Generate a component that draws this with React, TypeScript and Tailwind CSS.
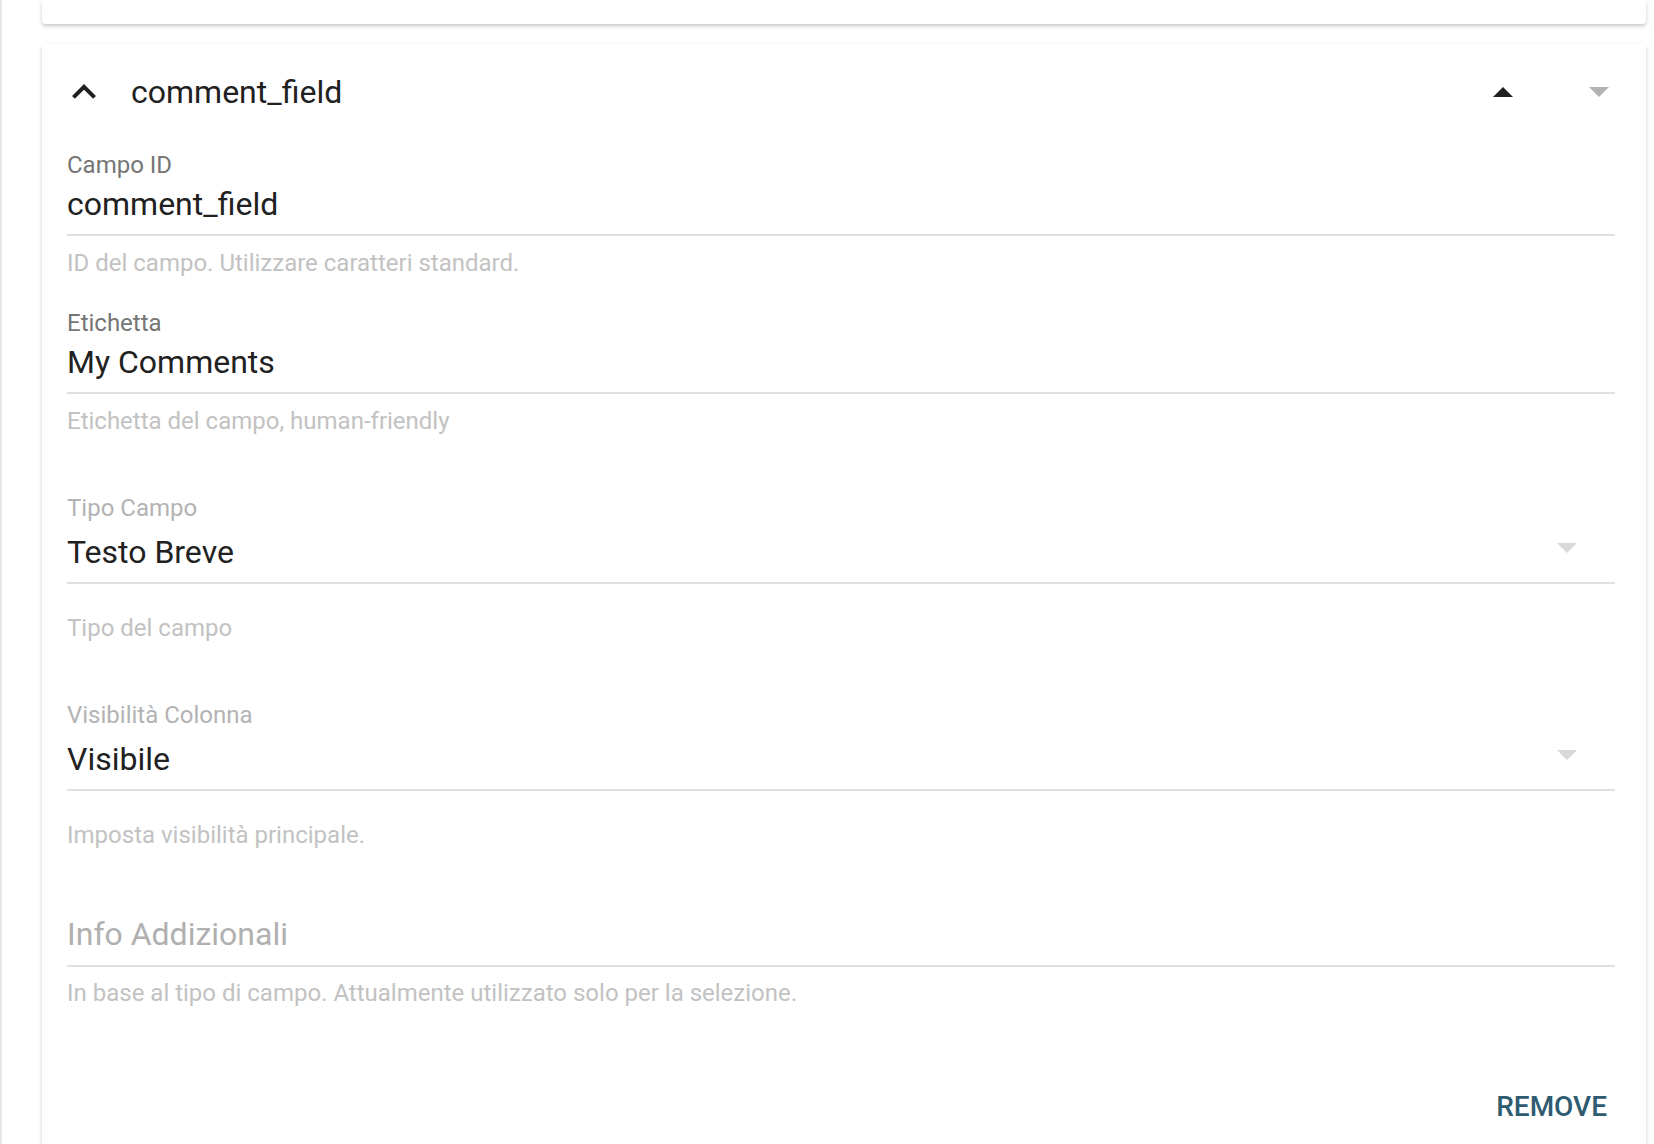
import React from "react";

function ArrowDropDown({ color, className }: { color: string; className?: string }) {
  return (
    <svg width="20" height="10" viewBox="0 0 20 10" className={className}>
      <path d="M0 0 L10 10 L20 0 Z" fill={color} />
    </svg>
  );
}

function ArrowDropUp({ color }: { color: string }) {
  return (
    <svg width="20" height="10" viewBox="0 0 20 10">
      <path d="M0 10 L10 0 L20 10 Z" fill={color} />
    </svg>
  );
}

function TextField({
  label,
  value,
  helper,
  className,
}: {
  label: string;
  value: string;
  helper: string;
  className?: string;
}) {
  return (
    <div className={className}>
      <div className="text-[24px] leading-[24px] text-[#757575]">{label}</div>
      <div className="mt-[9px] pb-[12px] border-b-2 border-[#e0e0e0]">
        <div className="text-[32px] leading-[36px] text-[#212121]">{value}</div>
      </div>
      <div className="mt-[15px] text-[24px] leading-[24px] text-[#c2c2c2]">{helper}</div>
    </div>
  );
}

function SelectField({
  label,
  value,
  helper,
  className,
}: {
  label: string;
  value: string;
  helper: string;
  className?: string;
}) {
  return (
    <div className={className}>
      <div className="text-[24px] leading-[24px] text-[#b3b3b3]">{label}</div>
      <div className="mt-[14px] pb-[12px] border-b-2 border-[#e0e0e0] flex">
        <div className="flex-1 text-[32px] leading-[36px] text-[#212121]">{value}</div>
        <ArrowDropDown color="#d9d9d9" className="mt-[9px] mr-[38px]" />
      </div>
      <div className="mt-[32px] text-[24px] leading-[24px] text-[#c2c2c2]">{helper}</div>
    </div>
  );
}

export default function App() {
  return (
    <div className="min-h-screen bg-white border-l-2 border-[#e6e6e6] pl-[40px] pr-[8px] font-['Roboto',sans-serif]">
      <div className="h-[24px] bg-white rounded-b-[4px] shadow-[0_2px_5px_rgba(0,0,0,0.16),0_2px_2px_rgba(0,0,0,0.08)]" />
      <div className="mt-[20px] bg-white rounded-[4px] shadow-[0_2px_5px_rgba(0,0,0,0.16),0_2px_2px_rgba(0,0,0,0.08)] pb-[60px]">
        <div className="h-[96px] flex items-center pl-[18px]">
          <svg width="48" height="48" viewBox="0 0 24 24">
            <path d="M12 8l-6 6 1.41 1.41L12 10.83l4.59 4.58L18 14z" fill="#212121" />
          </svg>
          <div className="ml-[23px] text-[32px] leading-[40px] text-[#212121]">comment_field</div>
          <div className="ml-auto flex">
            <div className="w-[96px] h-[96px] flex items-center justify-center pl-[2px]">
              <ArrowDropUp color="#212121" />
            </div>
            <div className="w-[96px] h-[96px] flex items-center justify-center pl-[2px]">
              <ArrowDropDown color="#b3b3b3" />
            </div>
          </div>
        </div>
        <div className="pl-[25px] pr-[31px]">
          <TextField
            className="mt-[13px]"
            label="Campo ID"
            value="comment_field"
            helper="ID del campo. Utilizzare caratteri standard."
          />
          <TextField
            className="mt-[36px]"
            label="Etichetta"
            value="My Comments"
            helper="Etichetta del campo, human-friendly"
          />
          <SelectField
            className="mt-[63px]"
            label="Tipo Campo"
            value="Testo Breve"
            helper="Tipo del campo"
          />
          <SelectField
            className="mt-[63px]"
            label="Visibilità Colonna"
            value="Visibile"
            helper="Imposta visibilità principale."
          />
          <div className="mt-[69px]">
            <div className="pb-[13px] border-b-2 border-[#e0e0e0]">
              <div className="text-[32px] leading-[36px] text-[#b0b0b0]">Info Addizionali</div>
            </div>
            <div className="mt-[14px] text-[24px] leading-[24px] text-[#c2c2c2]">
              In base al tipo di campo. Attualmente utilizzato solo per la selezione.
            </div>
          </div>
          <div className="mt-[84px] flex justify-end pr-[8px]">
            <div className="text-[28px] leading-[36px] font-medium text-[#2e5b70]">REMOVE</div>
          </div>
        </div>
      </div>
    </div>
  );
}
